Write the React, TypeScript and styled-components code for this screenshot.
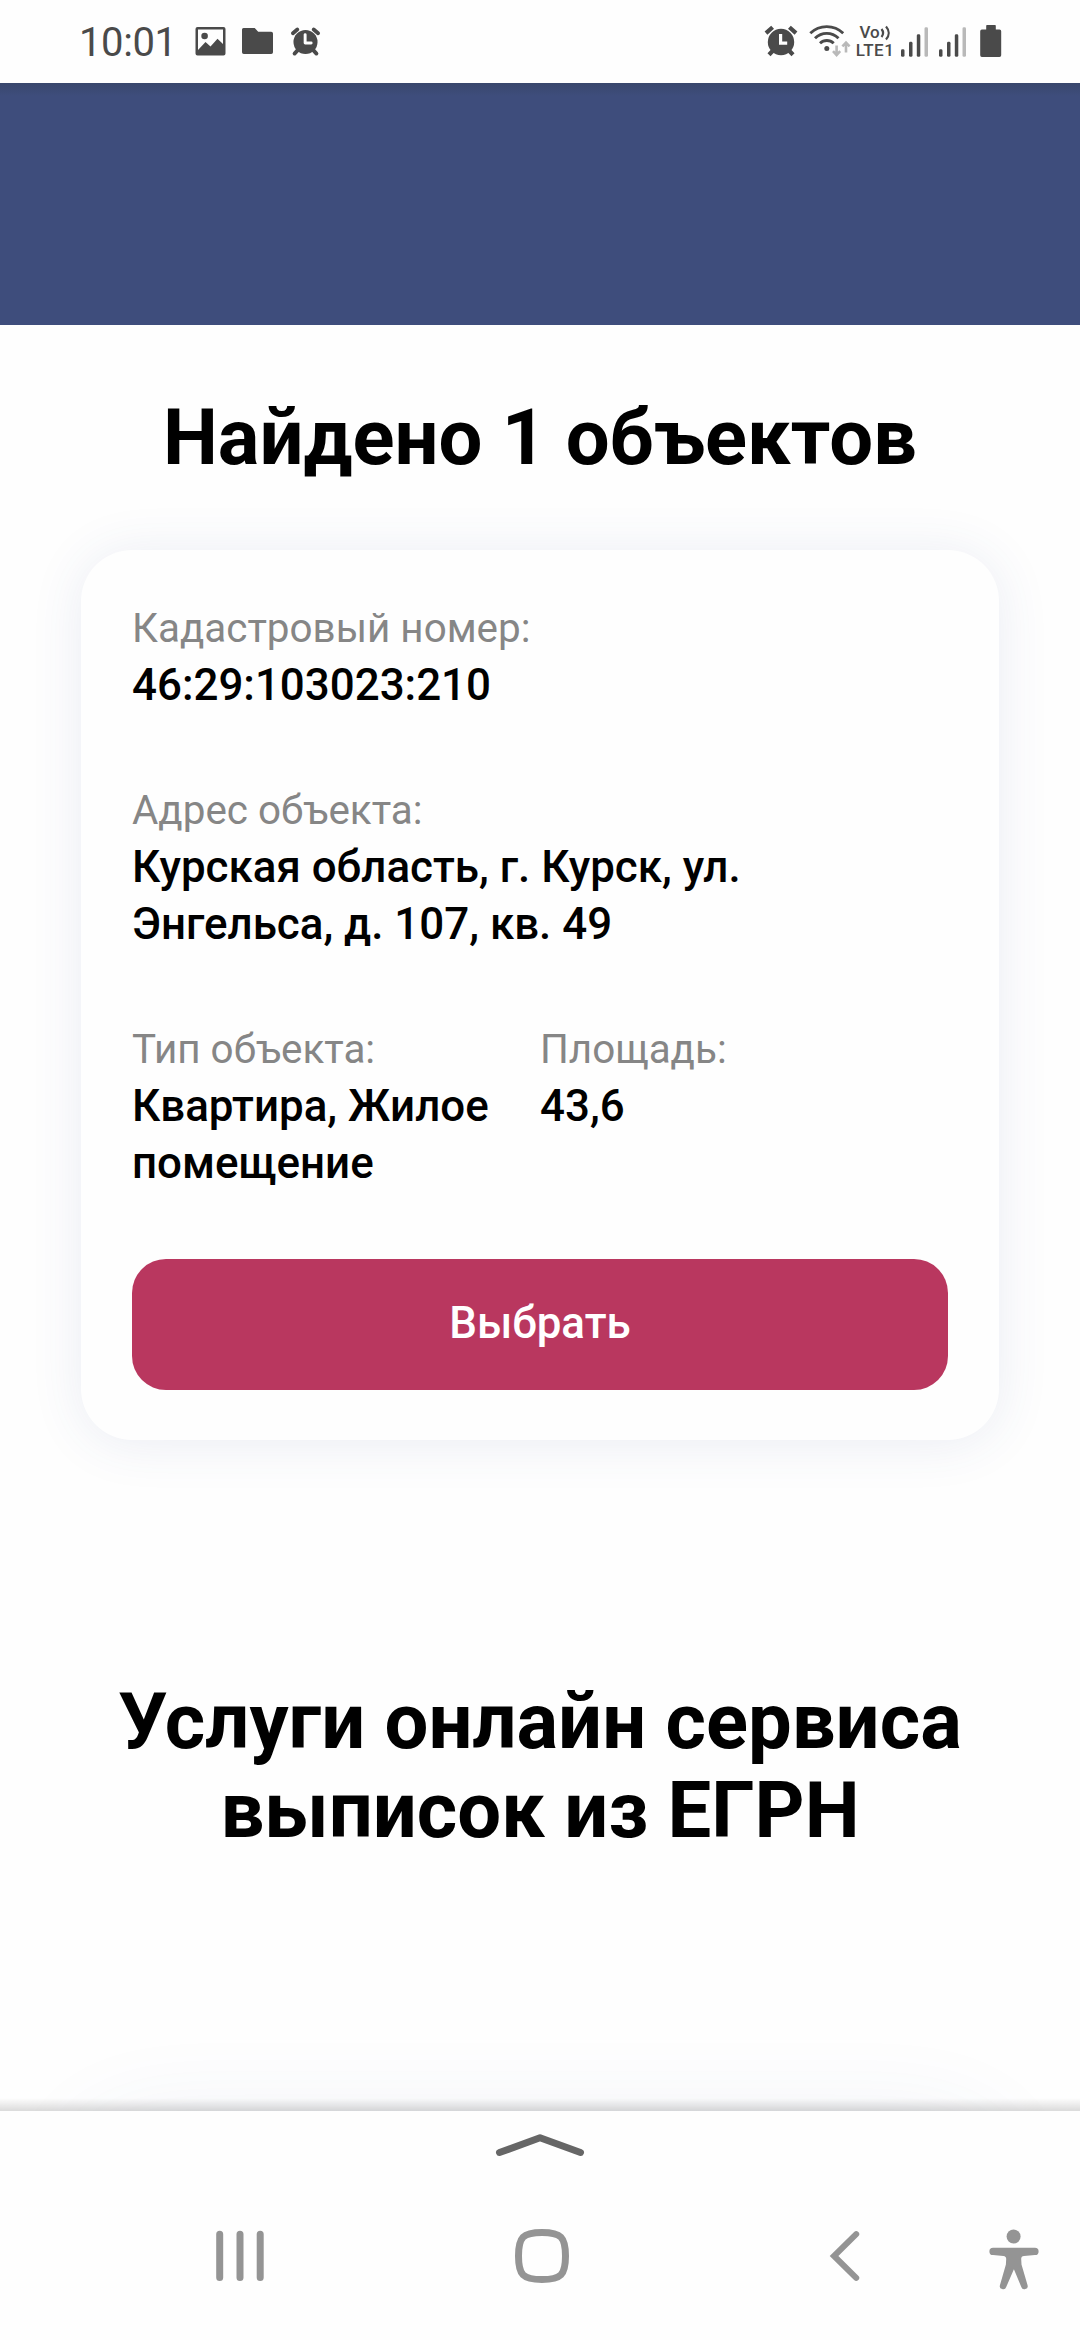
import React from "react";
import styled, { createGlobalStyle } from "styled-components";

const GlobalStyle = createGlobalStyle`
  *, *::before, *::after { box-sizing: border-box; }
  body { margin: 0; background: #fefefe; }
`;

const Screen = styled.div`
  display: flex;
  flex-direction: column;
  width: 1080px;
  height: 2340px;
  overflow: hidden;
  background: #fefefe;
  color: #000;
  font-family: Roboto, "Noto Sans", sans-serif;
`;

const StatusBar = styled.header`
  display: flex;
  justify-content: space-between;
  flex: none;
  height: 83px;
  padding: 24px 78px 0 79px;
  color: #4a4a4a;
`;

const StatusGroup = styled.div`
  display: flex;
  align-items: flex-start;
`;

const Clock = styled.span`
  width: 115px;
  font-size: 40px;
  line-height: 38px;
  letter-spacing: -0.4px;
  white-space: nowrap;
`;

const Glyph = styled.svg<{ $gap?: number }>`
  display: block;
  flex: none;
  margin-left: ${(p) => p.$gap ?? 0}px;
`;

const Network = styled.div`
  display: flex;
  flex-direction: column;
  align-items: center;
  width: 40px;
  margin-left: 4px;
  font-weight: 500;
`;

const Volte = styled.span`
  display: flex;
  height: 17px;
  font-size: 17px;
  line-height: 17px;
`;

const Lte = styled.span`
  font-size: 17px;
  line-height: 18px;
  letter-spacing: 0.5px;
`;

const Page = styled.main`
  display: flex;
  flex-direction: column;
  flex: 1;
  min-height: 0;
  overflow: hidden;
`;

const Banner = styled.div`
  flex: none;
  height: 242px;
  background: linear-gradient(#39476c 0, #3e4d7c 13px);
`;

const Title = styled.h1<{ $top: number }>`
  flex: none;
  margin: ${(p) => p.$top}px 81px 0;
  font-size: 77.75px;
  line-height: 89px;
  font-weight: 700;
  text-align: center;
`;

const Card = styled.section`
  display: flex;
  flex-direction: column;
  flex: none;
  margin: 68px 81px 0;
  padding: 51px 51px 50px;
  border-radius: 51px;
  background: #fefefe;
  box-shadow: 0 3px 52px rgba(62, 82, 150, 0.1);
`;

const Fields = styled.div`
  display: grid;
  grid-template-columns: 408px 408px;
  row-gap: 69px;
`;

const Field = styled.div<{ $wide?: boolean }>`
  grid-column: ${(p) => (p.$wide ? "1 / -1" : "auto")};
  padding-right: ${(p) => (p.$wide ? 140 : 30)}px;
`;

const Label = styled.div`
  font-size: 40.4px;
  line-height: 55px;
  color: #868686;
  white-space: nowrap;
`;

const Value = styled.div`
  padding-top: 1px;
  font-size: 43.9px;
  line-height: 57px;
  font-weight: 500;
`;

const SelectButton = styled.button`
  height: 131px;
  margin-top: 67px;
  padding: 0 0 2px;
  border: 0;
  border-radius: 34px;
  background: #b9375f;
  color: #fff;
  font: 500 43.9px/129px Roboto, sans-serif;
`;

const ServicesCard = styled.section`
  flex: none;
  height: 400px;
  margin: 270px 81px 0;
  border-radius: 68px;
  background: #fefefe;
  box-shadow: 0 0 100px rgba(62, 82, 150, 0.085);
`;

const NavBar = styled.nav`
  position: relative;
  display: flex;
  flex-direction: column;
  flex: none;
  height: 229px;
  background: #fefefe;

  &::before {
    content: "";
    position: absolute;
    left: 0;
    right: 0;
    bottom: 100%;
    height: 13px;
    background: linear-gradient(rgba(0, 0, 0, 0), rgba(0, 0, 0, 0.14));
  }
`;

const Handle = styled.div`
  display: flex;
  justify-content: center;
  height: 114px;
  padding-top: 20px;
`;

const NavButtons = styled.div`
  display: flex;
  align-items: flex-start;
  padding-left: 212px;
`;

const SIGNAL_BARS = [
  { x: 1, h: 7.5 },
  { x: 9, h: 15 },
  { x: 16.8, h: 22.5 },
  { x: 24.5, h: 29.5 },
];

const Signal = ({ gap }: { gap: number }) => (
  <Glyph $gap={gap} width="30" height="34" viewBox="0 0 30 34">
    {SIGNAL_BARS.map((b, i) => (
      <rect
        key={b.x}
        x={b.x}
        y={32.8 - b.h}
        width="3.5"
        height={b.h}
        rx="1.4"
        fill={i === 3 ? "#b9b9b9" : "#4a4a4a"}
      />
    ))}
  </Glyph>
);

const Alarm = ({ gap, size, soft }: { gap: number; size: number; soft?: boolean }) => (
  <Glyph $gap={gap} width={size} height="34" viewBox="0 0 34 34" preserveAspectRatio="xMidYMid meet">
    <g stroke="#4a4a4a" strokeWidth="4.2" strokeLinecap={soft ? "round" : "butt"}>
      <path d={soft ? "M3.2 8.4 8 4.4M30.8 8.4 26 4.4" : "M2 9.1 8.6 3.2M32 9.1 25.4 3.2"} />
      <path d="M9 26.5 5 30.8M25 26.5l4 4.3" />
    </g>
    <circle cx="17" cy="18" r="13.2" fill="#4a4a4a" />
    <path
      d="M16.6 10v9.2h6.6"
      fill="none"
      stroke="#fefefe"
      strokeWidth="3.2"
      strokeLinecap={soft ? "round" : "butt"}
      strokeLinejoin={soft ? "round" : "miter"}
    />
  </Glyph>
);

export default function App() {
  return (
    <>
      <GlobalStyle />
      <Screen>
        <StatusBar>
          <StatusGroup>
            <Clock>10:01</Clock>
            <Glyph $gap={1} width="31" height="34" viewBox="0 0 31 34">
              <path
                fill="#4a4a4a"
                fillRule="evenodd"
                d="M2.5 3h26a2 2 0 0 1 2 2v24.500a2 2 0 0 1-2 2h-26a2 2 0 0 1-2-2V5a2 2 0 0 1 2-2zM3 5.500V26l7.500-8 5 4.500 7-7.700L28 20V5.500z"
              />
              <circle cx="9.600" cy="12" r="3.300" fill="#4a4a4a" />
            </Glyph>
            <Glyph $gap={16} width="31" height="34" viewBox="0 0 31 34">
              <path
                fill="#4a4a4a"
                d="M1.500 4h11.200l3.500 3.800h13a1.800 1.800 0 0 1 1.800 1.800v18.600a1.800 1.800 0 0 1-1.800 1.800H1.800A1.800 1.800 0 0 1 0 28.200V5.500A1.500 1.500 0 0 1 1.500 4z"
              />
            </Glyph>
            <Alarm gap={17} size={31} soft />
          </StatusGroup>
          <StatusGroup>
            <Alarm gap={0} size={34} />
            <Glyph $gap={11} width="42" height="34" viewBox="0 0 42 34">
              <g fill="none" stroke="#4a4a4a" strokeWidth="2.900">
                <path d="M1.300 9.300C10.500.4 25 .4 34.200 9.300" />
                <path d="M6 14.300c6.700-6.600 16.800-6.600 23.500 0" />
                <path d="M11 19.300c4-3.800 9.700-3.800 13.700 0" />
              </g>
              <circle cx="17.800" cy="24.400" r="2.500" fill="#4a4a4a" />
              <path
                d="M27.600 21.500v9M24 27.200l3.600 3.800 3.600-3.800M37 28.500v-9.200M33.400 22.400l3.600-3.800 3.600 3.800"
                fill="none"
                stroke="#b9b9b9"
                strokeWidth="2.600"
              />
            </Glyph>
            <Network>
              <Volte>
                Vo
                <Glyph width="11" height="17" viewBox="0 0 11 17">
                  <path
                    d="M1.500 5c2 2.500 2 5.500 0 8M6 2.500c3.600 4 3.600 9 0 13"
                    fill="none"
                    stroke="#4a4a4a"
                    strokeWidth="2.200"
                  />
                </Glyph>
              </Volte>
              <Lte>LTE1</Lte>
            </Network>
            <Signal gap={5} />
            <Signal gap={8} />
            <Glyph $gap={12} width="22" height="34" viewBox="0 0 22 34">
              <path
                fill="#4a4a4a"
                d="M7 1h8q.800 0 .800.800V5.500h3.700A1.700 1.700 0 0 1 21.200 7.200v24a1.700 1.700 0 0 1-1.700 1.700H1.900A1.700 1.700 0 0 1 .2 31.200v-24A1.700 1.700 0 0 1 1.900 5.500h4.300V1.800Q6.200 1 7 1z"
              />
            </Glyph>
          </StatusGroup>
        </StatusBar>
        <Page>
          <Banner />
          <Title $top={68}>Найдено 1 объектов</Title>
          <Card>
            <Fields>
              <Field $wide>
                <Label>Кадастровый номер:</Label>
                <Value>46:29:103023:210</Value>
              </Field>
              <Field $wide>
                <Label>Адрес объекта:</Label>
                <Value>Курская область, г. Курск, ул. Энгельса, д. 107, кв. 49</Value>
              </Field>
              <Field>
                <Label>Тип объекта:</Label>
                <Value>Квартира, Жилое помещение</Value>
              </Field>
              <Field>
                <Label>Площадь:</Label>
                <Value>43,6</Value>
              </Field>
            </Fields>
            <SelectButton>Выбрать</SelectButton>
          </Card>
          <Title as="h2" $top={237}>
            Услуги онлайн сервиса выписок из ЕГРН
          </Title>
          <ServicesCard />
        </Page>
        <NavBar>
          <Handle>
            <Glyph width="90" height="28" viewBox="0 0 90 28">
              <path
                d="M4.500 21.500 45 6.800l40.500 14.700"
                fill="none"
                stroke="#666"
                strokeWidth="7"
                strokeLinecap="round"
                strokeLinejoin="round"
              />
            </Glyph>
          </Handle>
          <NavButtons>
            <Glyph width="56" height="64" viewBox="0 0 56 64">
              <path
                d="M7.700 9.300v43.200M28 9.300v43.200M48.200 9.300v43.200"
                stroke="#949494"
                strokeWidth="7"
                strokeLinecap="round"
              />
            </Glyph>
            <Glyph $gap={244} width="60" height="64" viewBox="0 0 60 64">
              <path
                d="M30 7.500C49 7.500 53.500 12 53.500 31S49 54.500 30 54.500 6.500 50 6.500 31 11 7.500 30 7.500z"
                fill="none"
                stroke="#949494"
                strokeWidth="7"
              />
            </Glyph>
            <Glyph $gap={254} width="40" height="64" viewBox="0 0 40 64">
              <path
                d="M30.200 9.200 8 31l22.200 21.800"
                fill="none"
                stroke="#949494"
                strokeWidth="6"
                strokeLinecap="round"
              />
            </Glyph>
            <Glyph $gap={120} width="56" height="68" viewBox="0 0 56 68">
              <circle cx="27.600" cy="11.500" r="7" fill="#949494" />
              <path
                fill="#949494"
                d="M7 22.800h42a3.600 3.600 0 0 1 0 7.200l-11 .9q-3 .3-2.800 3.200l.3 5.500L41.500 60a3.200 3.200 0 0 1-6.200 2L27.900 44.300 20.200 62a3.200 3.200 0 0 1-6.200-2l5.900-20.400.3-5.500q.100-2.900-2.800-3.200L7 30a3.600 3.600 0 0 1 0-7.200z"
              />
            </Glyph>
          </NavButtons>
        </NavBar>
      </Screen>
    </>
  );
}
